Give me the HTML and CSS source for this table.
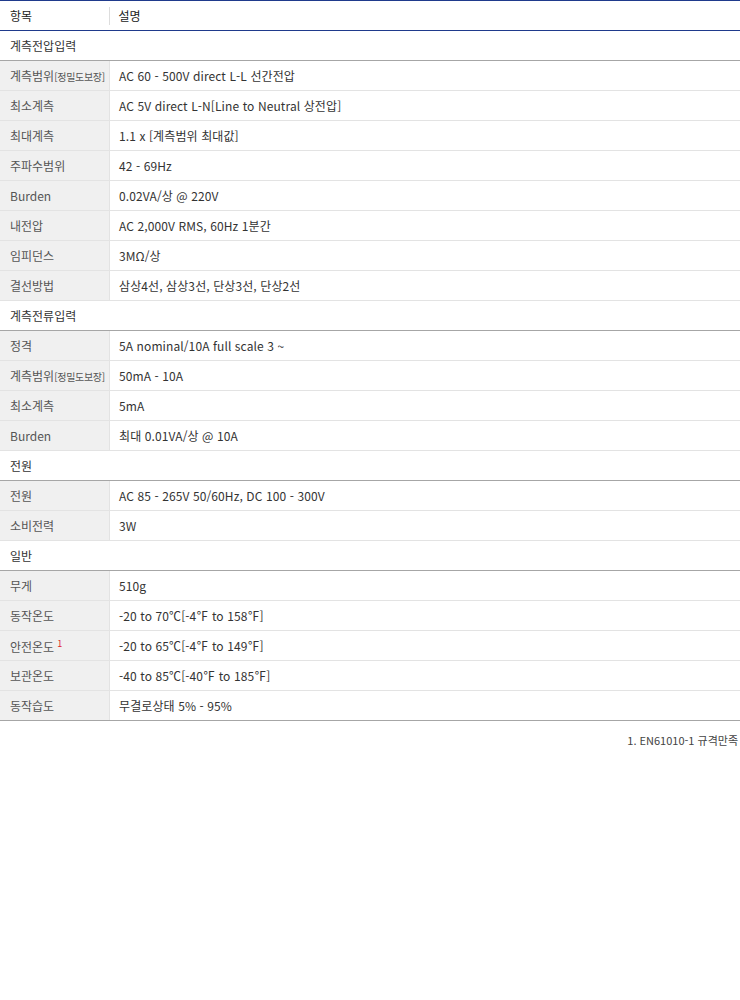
FILE: index.html
```html
<!doctype html>
<html lang="ko">
<head>
<meta charset="utf-8">
<title>사양</title>
<meta name="viewport" content="width=device-width,initial-scale=1">
<link rel="stylesheet" href="styles.css">
</head>
<body>
<table class="spec">
  <thead>
    <tr>
      <th class="k"><span>항목</span></th>
      <th class="v"><span>설명</span></th>
    </tr>
  </thead>
  <tbody>
    <tr class="sec"><td colspan="2">계측전압입력</td></tr>
    <tr><td class="k">계측범위<small>[정밀도보장]</small></td><td class="v">AC 60 - 500V direct L-L 선간전압</td></tr>
    <tr><td class="k">최소계측</td><td class="v">AC 5V direct L-N[Line to Neutral 상전압]</td></tr>
    <tr><td class="k">최대계측</td><td class="v">1.1 x [계측범위 최대값]</td></tr>
    <tr><td class="k">주파수범위</td><td class="v">42 - 69Hz</td></tr>
    <tr><td class="k">Burden</td><td class="v">0.02VA/상 @ 220V</td></tr>
    <tr><td class="k">내전압</td><td class="v">AC 2,000V RMS, 60Hz 1분간</td></tr>
    <tr><td class="k">임피던스</td><td class="v">3MΩ/상</td></tr>
    <tr><td class="k">결선방법</td><td class="v">삼상4선, 삼상3선, 단상3선, 단상2선</td></tr>

    <tr class="sec"><td colspan="2">계측전류입력</td></tr>
    <tr><td class="k">정격</td><td class="v">5A nominal/10A full scale 3 ~</td></tr>
    <tr><td class="k">계측범위<small>[정밀도보장]</small></td><td class="v">50mA - 10A</td></tr>
    <tr><td class="k">최소계측</td><td class="v">5mA</td></tr>
    <tr><td class="k">Burden</td><td class="v">최대 0.01VA/상 @ 10A</td></tr>

    <tr class="sec"><td colspan="2">전원</td></tr>
    <tr><td class="k">전원</td><td class="v">AC 85 - 265V 50/60Hz, DC 100 - 300V</td></tr>
    <tr><td class="k">소비전력</td><td class="v">3W</td></tr>

    <tr class="sec"><td colspan="2">일반</td></tr>
    <tr><td class="k">무게</td><td class="v">510g</td></tr>
    <tr><td class="k">동작온도</td><td class="v">-20 to 70℃[-4℉ to 158℉]</td></tr>
    <tr><td class="k">안전온도<sup>1</sup></td><td class="v">-20 to 65℃[-4℉ to 149℉]</td></tr>
    <tr><td class="k">보관온도</td><td class="v">-40 to 85℃[-40℉ to 185℉]</td></tr>
    <tr class="last"><td class="k">동작습도</td><td class="v">무결로상태 5% - 95%</td></tr>
  </tbody>
</table>
<p class="foot">1. EN61010-1 규격만족</p>
</body>
</html>
```

FILE: styles.css
```css
body {
  margin: 0;
  background: #fff;
  color: #333;
  font-family: "Noto Sans CJK KR", "Noto Sans", sans-serif;
  font-size: 12px;
}
.spec {
  width: 100%;
  border-collapse: collapse;
  border-top: 1px solid #1f3a8c;
}
.spec th, .spec td {
  height: 29px;
  padding: 0 0 0 9px;
  text-align: left;
  font-weight: normal;
  border-bottom: 1px solid #e3e3e3;
  white-space: nowrap;
}
.spec th {
  color: #222;
  border-bottom: 1px solid #1f3a8c;
}
.spec th.k { width: 99px; padding-left: 10px; }
.spec th.k span {
  display: block;
  border-right: 1px solid #ddd;
  line-height: 18px;
}
.spec td.k {
  width: 99px;
  padding-left: 10px;
  background: #f0f0f0;
  color: #555;
  border-right: 1px solid #e3e3e3;
}
.spec td.k small { font-size: 10px; letter-spacing: -0.3px; }
.spec td.k sup {
  color: #e0262d;
  font-size: 9px;
  margin-left: 3px;
  vertical-align: 5px;
}
.spec td.v { color: #333; letter-spacing: 0.1px; }
.spec .sec td {
  padding-left: 10px;
  color: #333;
  border-bottom: 1px solid #a6a6a6;
}
.spec .last td { border-bottom: 1px solid #a6a6a6; }
.foot {
  margin: 11px 2px 0 0;
  text-align: right;
  font-size: 11px;
  color: #444;
}
```
